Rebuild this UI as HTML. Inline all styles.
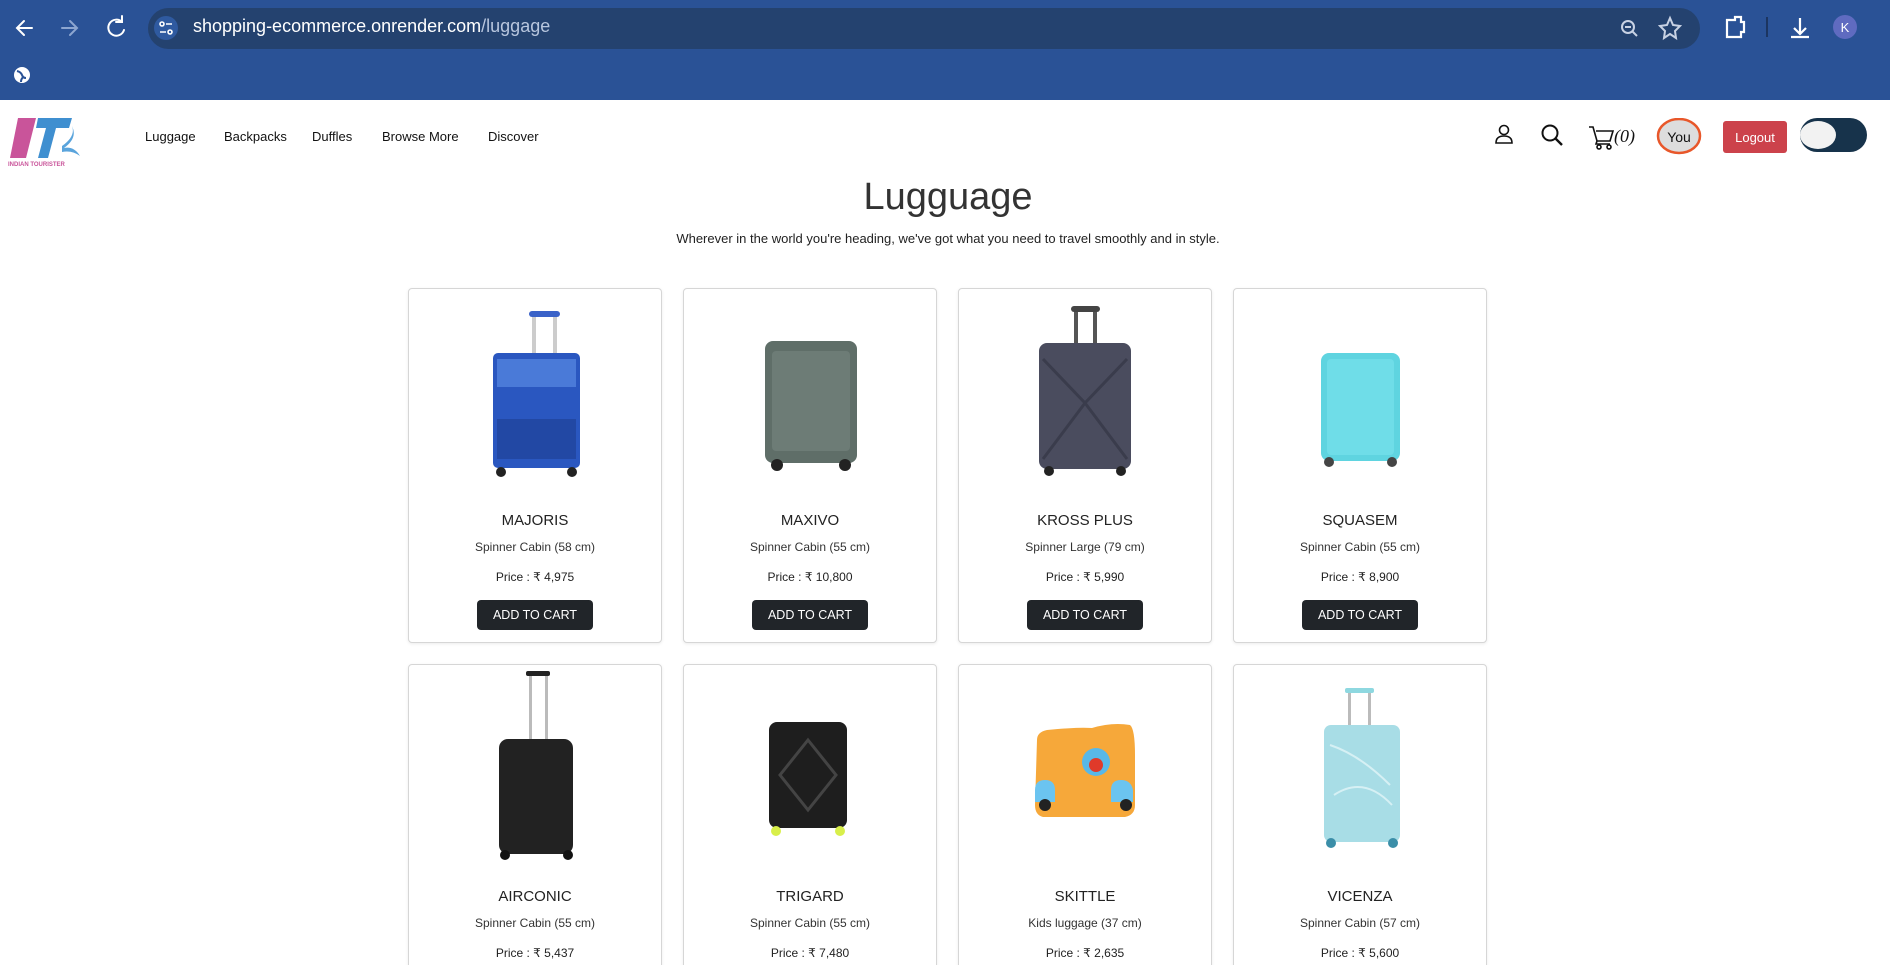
<!DOCTYPE html>
<html><head><meta charset="utf-8"><style>
*{margin:0;padding:0;box-sizing:border-box}
html,body{width:1890px;height:965px;overflow:hidden}
body{background:#fff;font-family:"Liberation Sans",sans-serif;position:relative;color:#212529}
.a{position:absolute}
.chrome{left:0;top:0;width:1890px;height:100px;background:#2a5296}
.url{left:148px;top:8px;width:1552px;height:41px;border-radius:21px;background:#24426f}
.nav a{position:absolute;top:129px;font-size:13px;color:#111;text-decoration:none}
.card{position:absolute;width:254px;height:355px;border:1px solid #d6d6d6;border-radius:4px;background:#fff;box-shadow:0 1px 3px rgba(0,0,0,.08)}
.card svg{position:absolute;left:0;top:0}
.nm{position:absolute;left:0;width:100%;top:223px;text-align:center;font-size:15px;color:#222}
.sp{position:absolute;left:0;width:100%;top:251px;text-align:center;font-size:12px;color:#333}
.pr{position:absolute;left:0;width:100%;top:281px;text-align:center;font-size:12px;color:#222}
.bt{position:absolute;left:68px;top:311px;width:116px;height:30px;background:#212529;border-radius:4px;color:#fff;font-size:12.5px;text-align:center;line-height:30px}
</style></head><body>
<div class="a chrome"></div>
<div class="a url"></div>
<svg class="a" style="left:0;top:0" width="1890" height="100">
<g stroke="#fff" stroke-width="2" fill="none" stroke-linecap="round">
<path d="M32 28H18M24 21l-7 7 7 7"/>
<path d="M62 28H76M70 21l7 7-7 7" stroke="#8da6d0"/>
<path d="M122 22a8 8 0 1 0 2 8M122 16v6h-6"/>
</g>
<circle cx="166" cy="28" r="12" fill="#2f5aa0"/>
<g stroke="#fff" stroke-width="1.6" fill="none"><circle cx="162" cy="24" r="2"/><path d="M166 24h6M160 32h6"/><circle cx="170" cy="32" r="2"/></g>
<g stroke="#c8d2e4" stroke-width="2" fill="none"><circle cx="1628" cy="27" r="6"/><path d="M1632 31l5 5M1625 27h6"/>
<path d="M1670 18l3 7 7 1-5 5 1 7-6-4-6 4 1-7-5-5 7-1z"/></g>
<g stroke="#fff" stroke-width="2.2" fill="none"><path d="M1727 20h8v-3h6v5h3v10h-3v5h-14z"/><path d="M1800 18v16M1794 28l6 6 6-6M1791 37h18"/></g>
<rect x="1766" y="17" width="2" height="20" fill="#1c3560"/>
<circle cx="1845" cy="27" r="12" fill="#5f6bc0"/><text x="1845" y="32" fill="#fff" font-size="13" text-anchor="middle" font-family="Liberation Sans">K</text>
<circle cx="22" cy="75" r="8" fill="#fff"/><path d="M17 71q4 1 5 4t4 3M21 82q0-4 3-5" stroke="#2a5296" stroke-width="2" fill="none"/>
</svg>
<div class="a" style="left:193px;top:16px;font-size:18px;color:#fff">shopping-ecommerce.onrender.com<span style="color:#b8c6de">/luggage</span></div>

<svg class="a" style="left:8px;top:116px" width="84" height="52">
<path d="M10 2h18l-10 40H2z" fill="#c9549a"/>
<path d="M30 2h34l-3 10H48l-8 30H30l8-30h-10z" fill="#3f8fd0"/>
<path d="M54 30q14-10 10-20 6 12-8 22 10-2 16 8-8-6-18-4z" fill="#5aa4dc"/>
<text x="0" y="50" font-size="6" font-weight="bold" fill="#c9549a" font-family="Liberation Sans">INDIAN TOURISTER</text>
</svg>
<div class="nav">
<a style="left:145px">Luggage</a><a style="left:224px">Backpacks</a><a style="left:312px">Duffles</a><a style="left:382px">Browse More</a><a style="left:488px">Discover</a>
</div>
<svg class="a" style="left:1490px;top:118px" width="400" height="40">
<g stroke="#111" stroke-width="1.6" fill="none"><circle cx="14" cy="12" r="4.5"/><path d="M6 25q0-7 8-7t8 7z"/>
<circle cx="60" cy="15" r="7.5" stroke-width="2"/><path d="M65 20l7 7" stroke-width="2.4"/>
<path d="M99 9h4l4 14h13l3-10h-17M107 23l-1 3h14"/><circle cx="109" cy="29" r="2"/><circle cx="119" cy="29" r="2"/></g>
<text x="124" y="24" font-size="18" font-style="italic" font-family="Liberation Serif" fill="#111">(0)</text>
<ellipse cx="189" cy="18" rx="21" ry="17" fill="#ddd" stroke="#e8572a" stroke-width="2.5"/>
<text x="189" y="24" font-size="14" text-anchor="middle" font-family="Liberation Sans" fill="#111">You</text>
<rect x="233" y="3" width="64" height="32" rx="3" fill="#cc424b"/>
<text x="265" y="24" font-size="13" text-anchor="middle" font-family="Liberation Sans" fill="#fff">Logout</text>
<rect x="310" y="0" width="67" height="34" rx="17" fill="#17334b"/>
<ellipse cx="328" cy="17" rx="18" ry="14" fill="#f2f2f2"/>
</svg>

<div class="a" style="left:0;width:1896px;top:176px;text-align:center;font-size:38px;color:#333">Lugguage</div>
<div class="a" style="left:0;width:1896px;top:231px;text-align:center;font-size:13px;color:#222">Wherever in the world you're heading, we've got what you need to travel smoothly and in style.</div>

<div class="card" style="left:408px;top:288px">
<svg width="254" height="220"><rect x="123" y="25" width="4" height="40" fill="#ccc"/><rect x="144" y="25" width="4" height="40" fill="#ccc"/><rect x="120" y="22" width="31" height="6" rx="3" fill="#3a62c8"/>
<rect x="84" y="64" width="87" height="115" rx="5" fill="#2a57c0"/><rect x="88" y="70" width="79" height="28" fill="#4a7ad8"/><rect x="88" y="130" width="79" height="40" fill="#2248a4"/>
<circle cx="92" cy="183" r="5" fill="#222"/><circle cx="163" cy="183" r="5" fill="#222"/></svg>
<div class="nm">MAJORIS</div><div class="sp">Spinner Cabin (58 cm)</div><div class="pr">Price : ₹ 4,975</div><div class="bt">ADD TO CART</div></div>

<div class="card" style="left:683px;top:288px">
<svg width="254" height="220"><rect x="81" y="52" width="92" height="122" rx="8" fill="#5f6e68"/><rect x="88" y="62" width="78" height="100" rx="4" fill="#6d7c76"/>
<circle cx="93" cy="176" r="6" fill="#222"/><circle cx="161" cy="176" r="6" fill="#222"/></svg>
<div class="nm">MAXIVO</div><div class="sp">Spinner Cabin (55 cm)</div><div class="pr">Price : ₹ 10,800</div><div class="bt">ADD TO CART</div></div>

<div class="card" style="left:958px;top:288px">
<svg width="254" height="220"><rect x="115" y="20" width="4" height="36" fill="#555"/><rect x="134" y="20" width="4" height="36" fill="#555"/><rect x="112" y="17" width="29" height="6" rx="3" fill="#444"/>
<rect x="80" y="54" width="92" height="126" rx="8" fill="#4a4c5e"/><path d="M84 70l42 44 42-44M84 170l42-56 42 56" stroke="#3a3c4c" stroke-width="3" fill="none"/>
<circle cx="90" cy="182" r="5" fill="#222"/><circle cx="162" cy="182" r="5" fill="#222"/></svg>
<div class="nm">KROSS PLUS</div><div class="sp">Spinner Large (79 cm)</div><div class="pr">Price : ₹ 5,990</div><div class="bt">ADD TO CART</div></div>

<div class="card" style="left:1233px;top:288px">
<svg width="254" height="220"><rect x="87" y="64" width="79" height="108" rx="8" fill="#5fd4e0"/><rect x="93" y="70" width="67" height="96" rx="4" fill="#6fdde8"/>
<circle cx="95" cy="173" r="5" fill="#444"/><circle cx="158" cy="173" r="5" fill="#444"/></svg>
<div class="nm">SQUASEM</div><div class="sp">Spinner Cabin (55 cm)</div><div class="pr">Price : ₹ 8,900</div><div class="bt">ADD TO CART</div></div>

<div class="card" style="left:408px;top:664px">
<svg width="254" height="220"><rect x="120" y="8" width="3" height="68" fill="#bbb"/><rect x="136" y="8" width="3" height="68" fill="#bbb"/><rect x="117" y="6" width="24" height="5" rx="2" fill="#222"/>
<rect x="90" y="74" width="74" height="115" rx="9" fill="#222"/>
<circle cx="96" cy="190" r="5" fill="#111"/><circle cx="159" cy="190" r="5" fill="#111"/></svg>
<div class="nm">AIRCONIC</div><div class="sp">Spinner Cabin (55 cm)</div><div class="pr">Price : ₹ 5,437</div><div class="bt">ADD TO CART</div></div>

<div class="card" style="left:683px;top:664px">
<svg width="254" height="220"><rect x="85" y="57" width="78" height="106" rx="8" fill="#1e1e1e"/><path d="M124 75l28 35-28 35-28-35z" stroke="#444" stroke-width="3" fill="none"/>
<circle cx="92" cy="166" r="5" fill="#d8ef4a"/><circle cx="156" cy="166" r="5" fill="#d8ef4a"/></svg>
<div class="nm">TRIGARD</div><div class="sp">Spinner Cabin (55 cm)</div><div class="pr">Price : ₹ 7,480</div><div class="bt">ADD TO CART</div></div>

<div class="card" style="left:958px;top:664px">
<svg width="254" height="220"><path d="M78 75q0-8 10-10 30-3 45-2 20-6 38-3 5 4 5 30v50q0 10-10 12H84q-8-2-8-12z" fill="#f6a83a"/>
<circle cx="137" cy="97" r="14" fill="#58b8e8"/><circle cx="137" cy="100" r="7" fill="#e03a2a"/>
<path d="M76 125q0-10 10-10t10 10v12H76zM152 125q0-10 10-10t12 10v12h-22z" fill="#6bc4f0"/>
<circle cx="86" cy="140" r="6" fill="#222"/><circle cx="167" cy="140" r="6" fill="#222"/></svg>
<div class="nm">SKITTLE</div><div class="sp">Kids luggage (37 cm)</div><div class="pr">Price : ₹ 2,635</div><div class="bt">ADD TO CART</div></div>

<div class="card" style="left:1233px;top:664px">
<svg width="254" height="220"><rect x="114" y="26" width="3" height="36" fill="#bbb"/><rect x="134" y="26" width="3" height="36" fill="#bbb"/><rect x="111" y="23" width="29" height="5" rx="2" fill="#8ed8e0"/>
<rect x="90" y="60" width="76" height="117" rx="7" fill="#a8dde6"/><path d="M96 80q30 10 60 40M100 130q30-20 58 10" stroke="#d6f0f4" stroke-width="2" fill="none"/>
<circle cx="97" cy="178" r="5" fill="#3b8ea8"/><circle cx="159" cy="178" r="5" fill="#3b8ea8"/></svg>
<div class="nm">VICENZA</div><div class="sp">Spinner Cabin (57 cm)</div><div class="pr">Price : ₹ 5,600</div><div class="bt">ADD TO CART</div></div>
</body></html>
